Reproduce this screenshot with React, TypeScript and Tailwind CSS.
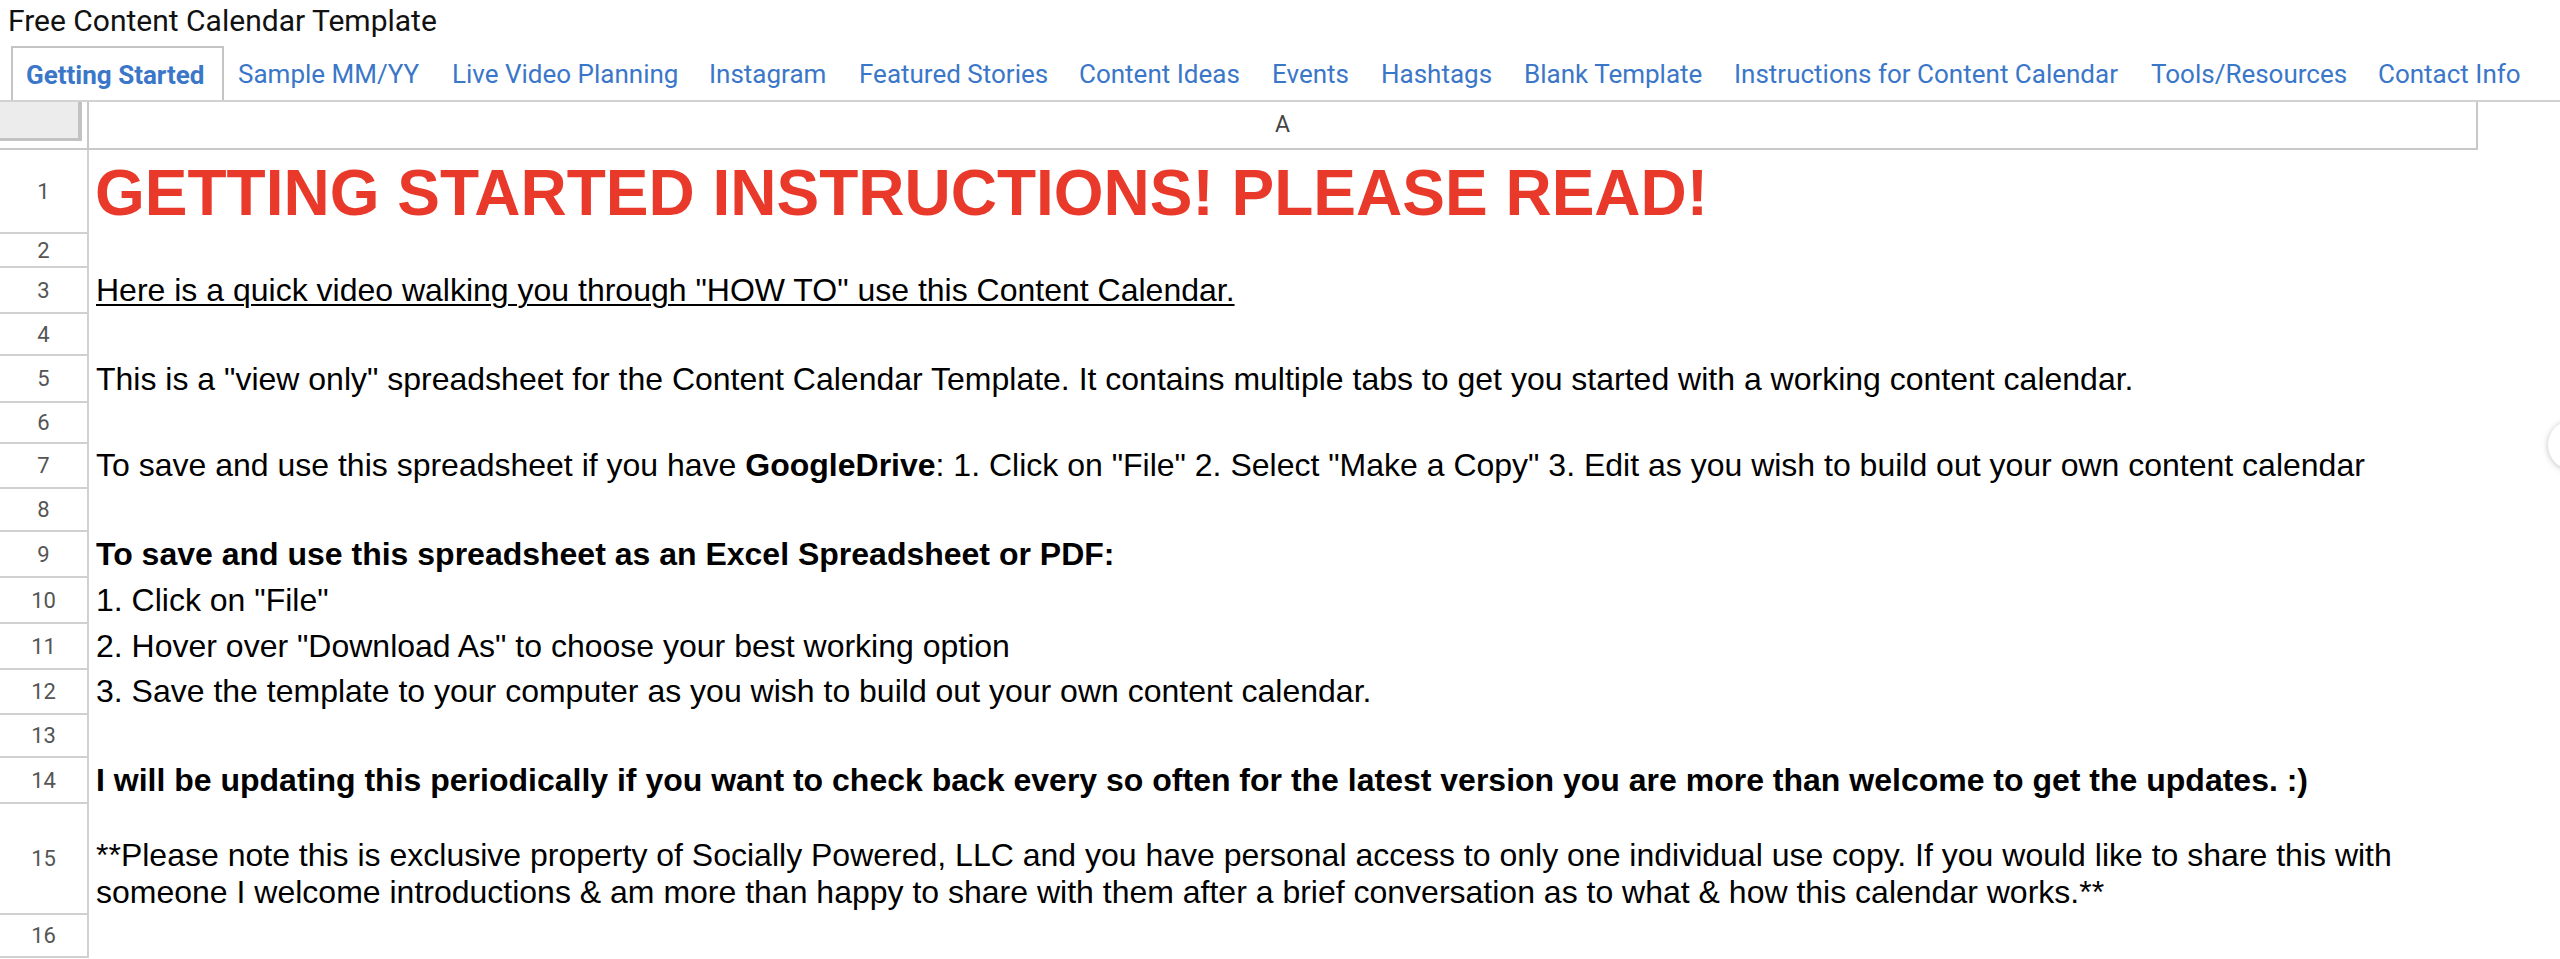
import React from "react";

const tabs: { label: string; w: number }[] = [
  { label: "Sample MM/YY", w: 214 },
  { label: "Live Video Planning", w: 257 },
  { label: "Instagram", w: 150 },
  { label: "Featured Stories", w: 220 },
  { label: "Content Ideas", w: 193 },
  { label: "Events", w: 109 },
  { label: "Hashtags", w: 143 },
  { label: "Blank Template", w: 210 },
  { label: "Instructions for Content Calendar", w: 417 },
  { label: "Tools/Resources", w: 227 },
  { label: "Contact Info", w: 157 },
];

type Row = { n: number; h: string; content?: React.ReactNode; kind?: "title" | "two" };

const rows: Row[] = [
  {
    n: 1,
    h: "h-[84px]",
    kind: "title",
    content: "GETTING STARTED INSTRUCTIONS! PLEASE READ!",
  },
  { n: 2, h: "h-[34px]" },
  {
    n: 3,
    h: "h-[46px]",
    content: (
      <span className="underline underline-offset-[3px] decoration-[2px]">
        Here is a quick video walking you through "HOW TO" use this Content Calendar.
      </span>
    ),
  },
  { n: 4, h: "h-[42px]" },
  {
    n: 5,
    h: "h-[47px]",
    content:
      'This is a "view only" spreadsheet for the Content Calendar Template. It contains multiple tabs to get you started with a working content calendar.',
  },
  { n: 6, h: "h-[41px]" },
  {
    n: 7,
    h: "h-[45px]",
    content: (
      <>
        To save and use this spreadsheet if you have <b>GoogleDrive</b>: 1. Click on "File" 2. Select "Make a Copy" 3.
        Edit as you wish to build out your own content calendar
      </>
    ),
  },
  { n: 8, h: "h-[43px]" },
  {
    n: 9,
    h: "h-[46px]",
    content: <b>To save and use this spreadsheet as an Excel Spreadsheet or PDF:</b>,
  },
  { n: 10, h: "h-[46px]", content: '1. Click on "File"' },
  { n: 11, h: "h-[46px]", content: '2. Hover over "Download As" to choose your best working option' },
  {
    n: 12,
    h: "h-[45px]",
    content: "3. Save the template to your computer as you wish to build out your own content calendar.",
  },
  { n: 13, h: "h-[43px]" },
  {
    n: 14,
    h: "h-[46px]",
    content: (
      <b>
        I will be updating this periodically if you want to check back every so often for the latest version you are
        more than welcome to get the updates. :)
      </b>
    ),
  },
  {
    n: 15,
    h: "h-[111px]",
    kind: "two",
    content: (
      <>
        **Please note this is exclusive property of Socially Powered, LLC and you have personal access to only one
        individual use copy. If you would like to share this with
        <br />
        someone I welcome introductions &amp; am more than happy to share with them after a brief conversation as to
        what &amp; how this calendar works.**
      </>
    ),
  },
  { n: 16, h: "h-[43px]" },
];

export default function App() {
  return (
    <div className="relative w-[2560px] h-[959px] overflow-hidden bg-white">
      {/* Document title */}
      <div className="h-[46px] pl-[8px] pt-[6px] font-['Roboto',sans-serif] text-[30px] leading-none text-[#111]">
        Free Content Calendar Template
      </div>

      {/* Sheet tabs */}
      <div className="flex h-[56px] border-b-2 border-[#d2d2d2] pl-[11px] font-['Roboto',sans-serif] text-[26px] text-[#3b77c8]">
        <div className="flex h-[54px] w-[213px] items-center border-x-2 border-t-2 border-[#c4c4c4] bg-white pl-[13px] pt-[2px] font-bold">
          Getting Started
        </div>
        {tabs.map((t) => (
          <div
            key={t.label}
            className="flex h-[54px] items-center pl-[14px] pt-[2px] whitespace-nowrap"
            style={{ width: t.w }}
          >
            {t.label}
          </div>
        ))}
      </div>

      {/* Column header row */}
      <div className="flex h-[48px]">
        <div className="h-full w-[89px] border-r-2 border-b-2 border-[#c8c8c8]">
          <div className="h-[39px] w-[82px] border-r-4 border-b-[3px] border-[#c2c2c2] bg-[#ececec]" />
        </div>
        <div className="flex h-full w-[2389px] items-center justify-center border-r-2 border-b-2 border-[#c8c8c8] font-['Roboto',sans-serif] text-[23px] text-[#444]">
          A
        </div>
      </div>

      {/* Rows */}
      {rows.map((r) => (
        <div key={r.n} className={`flex ${r.h}`}>
          <div className="flex h-full w-[89px] shrink-0 items-center justify-center border-r-2 border-b-2 border-[#d0d0d0] font-['Roboto',sans-serif] text-[22px] text-[#555]">
            {r.n}
          </div>
          {r.kind === "title" ? (
            <div className="flex h-full flex-1 items-end pb-[9px] pl-[6px] font-['Liberation_Sans',Arial,sans-serif] text-[64px] font-bold leading-none whitespace-nowrap text-[#e8392b]">
              {r.content}
            </div>
          ) : r.kind === "two" ? (
            <div className="flex h-full flex-1 items-end pb-[4px] pl-[7px] font-['Liberation_Sans',Arial,sans-serif] text-[32px] leading-[37px] whitespace-nowrap text-black">
              <div>{r.content}</div>
            </div>
          ) : (
            <div className="flex h-full flex-1 items-end pb-[8px] pl-[7px] font-['Liberation_Sans',Arial,sans-serif] text-[32px] leading-none whitespace-nowrap text-black">
              {r.content ? <div>{r.content}</div> : null}
            </div>
          )}
        </div>
      ))}

      {/* Side scroll handle */}
      <div className="absolute left-[2548px] top-[420px] h-[50px] w-[50px] rounded-full bg-white shadow-[0_1px_6px_rgba(0,0,0,0.25)]" />
    </div>
  );
}
